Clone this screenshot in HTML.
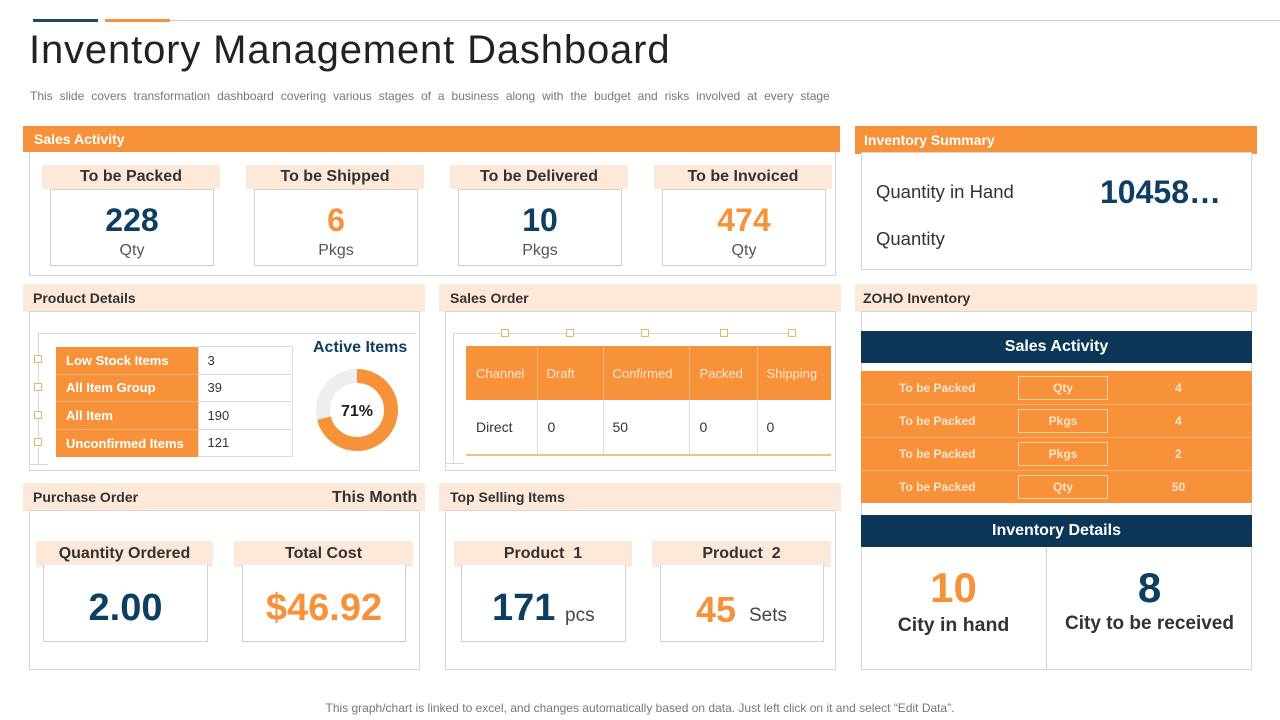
<!DOCTYPE html>
<html><head><meta charset="utf-8"><style>
*{margin:0;padding:0;box-sizing:border-box}
body{width:1280px;height:720px;background:#fff;position:relative;overflow:hidden;font-family:"Liberation Sans",Arial,sans-serif;color:#333}
div{position:absolute}
.ob{background:#F7923A;color:#fff;font-weight:bold;font-size:14px;padding-left:11px;line-height:26px}
.pb{background:#FCE9DA;color:#333;font-weight:bold;font-size:14px;padding-left:10px;line-height:28px}
.bx{border:1px solid #d6d6d6;background:#fff}
.ch{background:#FCE9DA;text-align:center;font-weight:bold;font-size:16px;color:#333;line-height:24px}
.cb{border:1px solid #d0d0d0;background:#fff;text-align:center}
.navy{color:#0E3F62}.org{color:#F7923A}
.sq{width:8px;height:8px;border:1px solid #e2b76e;background:#fff}
table{border-collapse:collapse}
</style></head><body>
<div style="left:33px;top:19px;width:65px;height:3px;background:#1B4965"></div>
<div style="left:105px;top:19px;width:65px;height:3px;background:#F7923A"></div>
<div style="left:170px;top:20px;width:1110px;height:1px;background:#ccc"></div>
<div style="left:29px;top:28px;font-size:40px;color:#222;letter-spacing:0.85px;white-space:nowrap">Inventory Management Dashboard</div>
<div style="left:30px;top:89px;font-size:12px;color:#777;word-spacing:3.6px;white-space:nowrap">This slide covers transformation dashboard covering various stages of a business along with the budget and risks involved at every stage</div>

<!-- Sales activity -->
<div class="ob" style="left:23px;top:126px;width:817px;height:26px">Sales Activity</div>
<div class="bx" style="left:29px;top:152px;width:807px;height:124px;border-top:none"></div>
<div class="ch" style="left:42px;top:165px;width:178px">To be Packed</div>
<div class="cb" style="left:50px;top:189px;width:164px;height:77px"><div style="left:0;right:0;top:12px;font-size:32px;font-weight:bold" class="navy">228</div><div style="left:0;right:0;top:52px;font-size:16px;color:#555">Qty</div></div>
<div class="ch" style="left:246px;top:165px;width:178px">To be Shipped</div>
<div class="cb" style="left:254px;top:189px;width:164px;height:77px"><div style="left:0;right:0;top:12px;font-size:32px;font-weight:bold" class="org">6</div><div style="left:0;right:0;top:52px;font-size:16px;color:#555">Pkgs</div></div>
<div class="ch" style="left:450px;top:165px;width:178px">To be Delivered</div>
<div class="cb" style="left:458px;top:189px;width:164px;height:77px"><div style="left:0;right:0;top:12px;font-size:32px;font-weight:bold" class="navy">10</div><div style="left:0;right:0;top:52px;font-size:16px;color:#555">Pkgs</div></div>
<div class="ch" style="left:654px;top:165px;width:178px">To be Invoiced</div>
<div class="cb" style="left:662px;top:189px;width:164px;height:77px"><div style="left:0;right:0;top:12px;font-size:32px;font-weight:bold" class="org">474</div><div style="left:0;right:0;top:52px;font-size:16px;color:#555">Qty</div></div>

<!-- Inventory summary -->
<div class="ob" style="left:855px;top:126px;width:402px;height:28px;padding-left:9px;line-height:28px">Inventory Summary</div>
<div class="bx" style="left:861px;top:152px;width:391px;height:118px"></div>
<div style="left:876px;top:181px;font-size:18.5px;color:#333">Quantity in Hand</div>
<div style="left:1100px;top:174px;font-size:32px;font-weight:bold" class="navy">10458…</div>
<div style="left:876px;top:228px;font-size:18.5px;color:#333">Quantity</div>

<!-- Product details -->
<div class="pb" style="left:23px;top:284px;width:402px;height:28px">Product Details</div>
<div class="bx" style="left:29px;top:311px;width:391px;height:160px"></div>
<div style="left:38px;top:333px;width:378px;height:1px;background:#d8d8d8"></div>
<div style="left:38px;top:333px;width:1px;height:132px;background:#d8d8d8"></div>
<div style="left:30px;top:464px;width:18px;height:1px;background:#d8d8d8"></div>
<div class="sq" style="left:34px;top:355px"></div><div class="sq" style="left:34px;top:383px"></div><div class="sq" style="left:34px;top:411px"></div><div class="sq" style="left:34px;top:438px"></div>
<div style="left:56px;top:346px">
<table style="font-size:13px;width:237px">
<tr style="height:27.5px"><td style="background:#F7923A;color:#fff;font-weight:bold;width:142px;padding-left:10px;border-bottom:1px solid #fbb67a">Low Stock Items</td><td style="border:1px solid #ddd;padding-left:9px;color:#333">3</td></tr>
<tr style="height:27.5px"><td style="background:#F7923A;color:#fff;font-weight:bold;padding-left:10px;border-bottom:1px solid #fbb67a">All Item Group</td><td style="border:1px solid #ddd;padding-left:9px">39</td></tr>
<tr style="height:27.5px"><td style="background:#F7923A;color:#fff;font-weight:bold;padding-left:10px;border-bottom:1px solid #fbb67a">All Item</td><td style="border:1px solid #ddd;padding-left:9px">190</td></tr>
<tr style="height:27.5px"><td style="background:#F7923A;color:#fff;font-weight:bold;padding-left:10px">Unconfirmed Items</td><td style="border:1px solid #ddd;padding-left:9px">121</td></tr>
</table></div>
<div style="left:313px;top:339px;font-size:16px;font-weight:bold" class="navy">Active Items</div>
<svg style="position:absolute;left:315px;top:368px" width="84" height="84" viewBox="0 0 84 84">
<circle cx="42" cy="42" r="34" fill="none" stroke="#eeeeee" stroke-width="14"/>
<circle cx="42" cy="42" r="34" fill="none" stroke="#F7923A" stroke-width="14" stroke-dasharray="151.7 213.6" transform="rotate(-90 42 42)"/>
<text x="42" y="48" text-anchor="middle" font-family="Liberation Sans" font-weight="bold" font-size="16" fill="#222">71%</text></svg>

<!-- Sales order -->
<div class="pb" style="left:439px;top:284px;width:402px;height:28px;padding-left:11px">Sales Order</div>
<div class="bx" style="left:445px;top:311px;width:391px;height:160px"></div>
<div style="left:453px;top:333px;width:340px;height:1px;background:#d8d8d8"></div>
<div style="left:453px;top:333px;width:1px;height:130px;background:#d8d8d8"></div>
<div style="left:446px;top:463px;width:18px;height:1px;background:#d8d8d8"></div>
<div class="sq" style="left:501px;top:329px"></div><div class="sq" style="left:566px;top:329px"></div><div class="sq" style="left:641px;top:329px"></div><div class="sq" style="left:720px;top:329px"></div><div class="sq" style="left:788px;top:329px"></div>
<div style="left:466px;top:346px">
<table style="font-size:13px;width:365px">
<tr style="height:54px;background:#F7923A;color:#fde4cc"><td style="width:71px;padding-left:10px;border-right:1px solid #fbb67a">Channel</td><td style="width:66px;padding-left:9px;border-right:1px solid #fbb67a">Draft</td><td style="width:86px;padding-left:9px;border-right:1px solid #fbb67a">Confirmed</td><td style="width:68px;padding-left:10px;border-right:1px solid #fbb67a">Packed</td><td style="padding-left:9px">Shipping</td></tr>
<tr style="height:55px;font-size:14px;color:#333;border-bottom:2px solid #f4c27f"><td style="padding-left:10px;border-right:1px solid #ddd">Direct</td><td style="padding-left:10px;border-right:1px solid #ddd">0</td><td style="padding-left:9px;border-right:1px solid #ddd">50</td><td style="padding-left:10px;border-right:1px solid #ddd">0</td><td style="padding-left:9px">0</td></tr>
</table></div>

<!-- ZOHO -->
<div class="pb" style="left:855px;top:284px;width:402px;height:28px;padding-left:8px">ZOHO Inventory</div>
<div class="bx" style="left:861px;top:311px;width:391px;height:359px"></div>
<div style="left:861px;top:331px;width:391px;height:32px;background:#0B3656;color:#fff;font-weight:bold;font-size:16px;text-align:center;line-height:32px">Sales Activity</div>
<div style="left:861px;top:371px;width:391px;height:132px;background:#F7923A"></div>
<div style="left:861px;top:404px;width:391px;height:1px;background:#fbb06b"></div>
<div style="left:861px;top:437px;width:391px;height:1px;background:#fbb06b"></div>
<div style="left:861px;top:470px;width:391px;height:1px;background:#fbb06b"></div>
<div style="left:861px;top:371px;width:391px;font-size:12px;font-weight:bold;color:#fde4cc">
<div style="left:38px;top:10px">To be Packed</div><div style="left:157px;top:5px;width:90px;height:24px;border:1px solid #fcd19c;text-align:center;line-height:22px">Qty</div><div style="left:314px;top:10px">4</div>
<div style="left:38px;top:43px">To be Packed</div><div style="left:157px;top:38px;width:90px;height:24px;border:1px solid #fcd19c;text-align:center;line-height:22px">Pkgs</div><div style="left:314px;top:43px">4</div>
<div style="left:38px;top:76px">To be Packed</div><div style="left:157px;top:71px;width:90px;height:24px;border:1px solid #fcd19c;text-align:center;line-height:22px">Pkgs</div><div style="left:314px;top:76px">2</div>
<div style="left:38px;top:109px">To be Packed</div><div style="left:157px;top:104px;width:90px;height:24px;border:1px solid #fcd19c;text-align:center;line-height:22px">Qty</div><div style="left:311px;top:109px">50</div>
</div>
<div style="left:861px;top:515px;width:391px;height:32px;background:#0B3656;color:#fff;font-weight:bold;font-size:16px;text-align:center;line-height:32px">Inventory Details</div>
<div style="left:1046px;top:547px;width:1px;height:122px;background:#d6d6d6"></div>
<div style="left:861px;top:564px;width:185px;text-align:center;font-size:42px;font-weight:bold" class="org">10</div>
<div style="left:861px;top:614px;width:185px;text-align:center;font-size:19.5px;font-weight:bold;color:#333">City in hand</div>
<div style="left:1047px;top:564px;width:205px;text-align:center;font-size:42px;font-weight:bold" class="navy">8</div>
<div style="left:1047px;top:613px;width:205px;text-align:center;font-size:19px;font-weight:bold;color:#333">City to be received</div>

<!-- Purchase order -->
<div class="pb" style="left:23px;top:483px;width:402px;height:28px">Purchase Order</div>
<div style="left:332px;top:489px;font-size:16px;font-weight:bold;color:#333">This Month</div>
<div class="bx" style="left:29px;top:510px;width:391px;height:160px"></div>
<div class="ch" style="left:36px;top:541px;width:177px;height:26px;line-height:26px">Quantity Ordered</div>
<div class="cb" style="left:43px;top:565px;width:165px;height:77px;border-top:none"><div style="left:0;right:0;top:22px;font-size:38px;font-weight:bold" class="navy">2.00</div></div>
<div class="ch" style="left:234px;top:541px;width:179px;height:26px;line-height:26px">Total Cost</div>
<div class="cb" style="left:242px;top:565px;width:164px;height:77px;border-top:none"><div style="left:0;right:0;top:22px;font-size:38px;font-weight:bold" class="org">$46.92</div></div>

<!-- Top selling -->
<div class="pb" style="left:439px;top:483px;width:402px;height:28px;padding-left:11px">Top Selling Items</div>
<div class="bx" style="left:445px;top:510px;width:391px;height:160px"></div>
<div class="ch" style="left:454px;top:541px;width:178px;height:26px;line-height:26px">Product&nbsp; 1</div>
<div class="cb" style="left:461px;top:565px;width:165px;height:77px;border-top:none"><div style="left:30px;top:22px;font-size:38px;font-weight:bold" class="navy">171</div><div style="left:103px;top:40px;font-size:19px;color:#444">pcs</div></div>
<div class="ch" style="left:652px;top:541px;width:179px;height:26px;line-height:26px">Product&nbsp; 2</div>
<div class="cb" style="left:660px;top:565px;width:164px;height:77px;border-top:none"><div style="left:35px;top:24px;font-size:36px;font-weight:bold" class="org">45</div><div style="left:88px;top:40px;font-size:19px;color:#444">Sets</div></div>

<div style="left:0;width:1280px;top:701px;text-align:center;font-size:12px;color:#777">This graph/chart is linked to excel, and changes automatically based on data. Just left click on it and select “Edit Data”.</div>
</body></html>
